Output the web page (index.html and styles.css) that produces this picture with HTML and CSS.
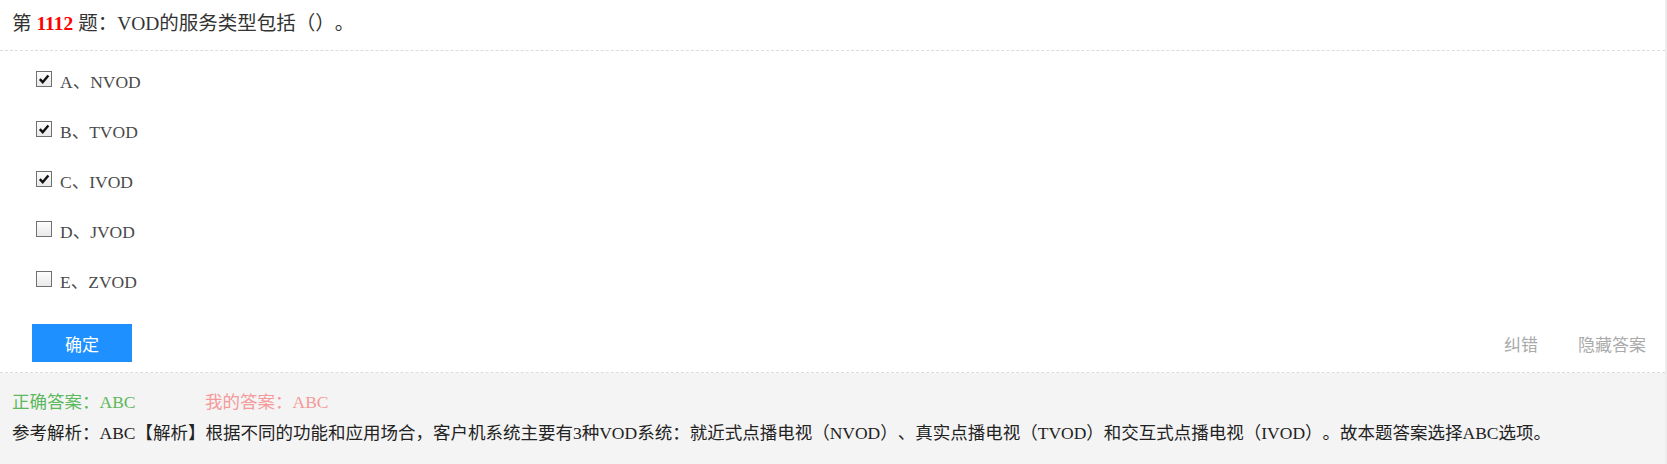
FILE: index.html
```html
<!DOCTYPE html>
<html lang="zh-CN">
<head>
<meta charset="utf-8">
<title>第1112题</title>
<link rel="stylesheet" href="styles.css">
</head>
<body>
<div class="page">
  <div class="question">
    <div class="title">第 <b class="num">1112</b> 题：VOD的服务类型包括（）。</div>
    <ul class="options">
      <li class="option"><span class="box checked"><svg viewBox="0 0 12 12" width="12" height="12"><path d="M1.8 6.2 L4.7 9.2 L10.4 2.4" fill="none" stroke="#111" stroke-width="2.4"/></svg></span><span>A、NVOD</span></li>
      <li class="option"><span class="box checked"><svg viewBox="0 0 12 12" width="12" height="12"><path d="M1.8 6.2 L4.7 9.2 L10.4 2.4" fill="none" stroke="#111" stroke-width="2.4"/></svg></span><span>B、TVOD</span></li>
      <li class="option"><span class="box checked"><svg viewBox="0 0 12 12" width="12" height="12"><path d="M1.8 6.2 L4.7 9.2 L10.4 2.4" fill="none" stroke="#111" stroke-width="2.4"/></svg></span><span>C、IVOD</span></li>
      <li class="option"><span class="box"></span><span>D、JVOD</span></li>
      <li class="option"><span class="box"></span><span>E、ZVOD</span></li>
    </ul>
    <div class="actions">
      <button class="submit">确定</button>
      <div class="links">
        <span class="link">纠错</span>
        <span class="link">隐藏答案</span>
      </div>
    </div>
  </div>
  <div class="answer">
    <div class="answer-line"><span class="correct">正确答案：ABC</span><span class="mine">我的答案：ABC</span></div>
    <div class="analysis">参考解析：ABC【解析】根据不同的功能和应用场合，客户机系统主要有3种VOD系统：就近式点播电视（NVOD）、真实点播电视（TVOD）和交互式点播电视（IVOD）。故本题答案选择ABC选项。</div>
  </div>
</div>
</body>
</html>
```
FILE: styles.css
```css
html, body {
  margin: 0;
  padding: 0;
  background: #ededed;
}
body {
  font-family: "Liberation Serif", "Noto Sans CJK SC", serif;
  color: #333;
  text-spacing-trim: space-all;
  font-feature-settings: "halt" 0, "chws" 0;
}
.page {
  width: 1665px;
  background: #fff;
}
.title {
  line-height: 48px;
  padding-left: 12px;
  font-size: 19.5px;
  color: #333;
  border-bottom: 1px dashed #dcdcdc;
  box-sizing: border-box;
  height: 51px;
}
.num {
  color: #f00;
  font-weight: bold;
}
.options {
  list-style: none;
  margin: 0;
  padding: 4px 0 0 36px;
}
.option {
  height: 50px;
  display: flex;
  align-items: center;
  gap: 8px;
  font-size: 17.5px;
  color: #4a4a4a;
}
.box {
  width: 14px;
  height: 14px;
  border: 1px solid #707070;
  background: linear-gradient(#fdfdfd, #e9e9e9);
  display: flex;
  align-items: center;
  justify-content: center;
  margin-top: -2px;
}
.box svg {
  display: block;
}
.actions {
  display: flex;
  align-items: center;
  justify-content: space-between;
  padding: 19px 19px 10px 32px;
  border-bottom: 1px dashed #dcdcdc;
}
.submit {
  width: 100px;
  height: 38px;
  border: none;
  background: #1e90ff;
  color: #fff;
  font-family: "Noto Sans CJK SC", sans-serif;
  font-size: 17px;
  padding: 0;
  margin: 0;
}
.links {
  display: flex;
  gap: 40px;
}
.link {
  font-family: "Noto Sans CJK SC", sans-serif;
  font-size: 17px;
  color: #aaa;
}
.answer {
  background: #f4f4f4;
  padding: 14px 12px 15px;
  font-size: 17.5px;
  line-height: 31px;
}
.correct {
  display: inline-block;
  width: 193px;
  color: #5cb85c;
}
.mine {
  color: #f49a9a;
}
.analysis {
  color: #222;
  white-space: nowrap;
}
```
